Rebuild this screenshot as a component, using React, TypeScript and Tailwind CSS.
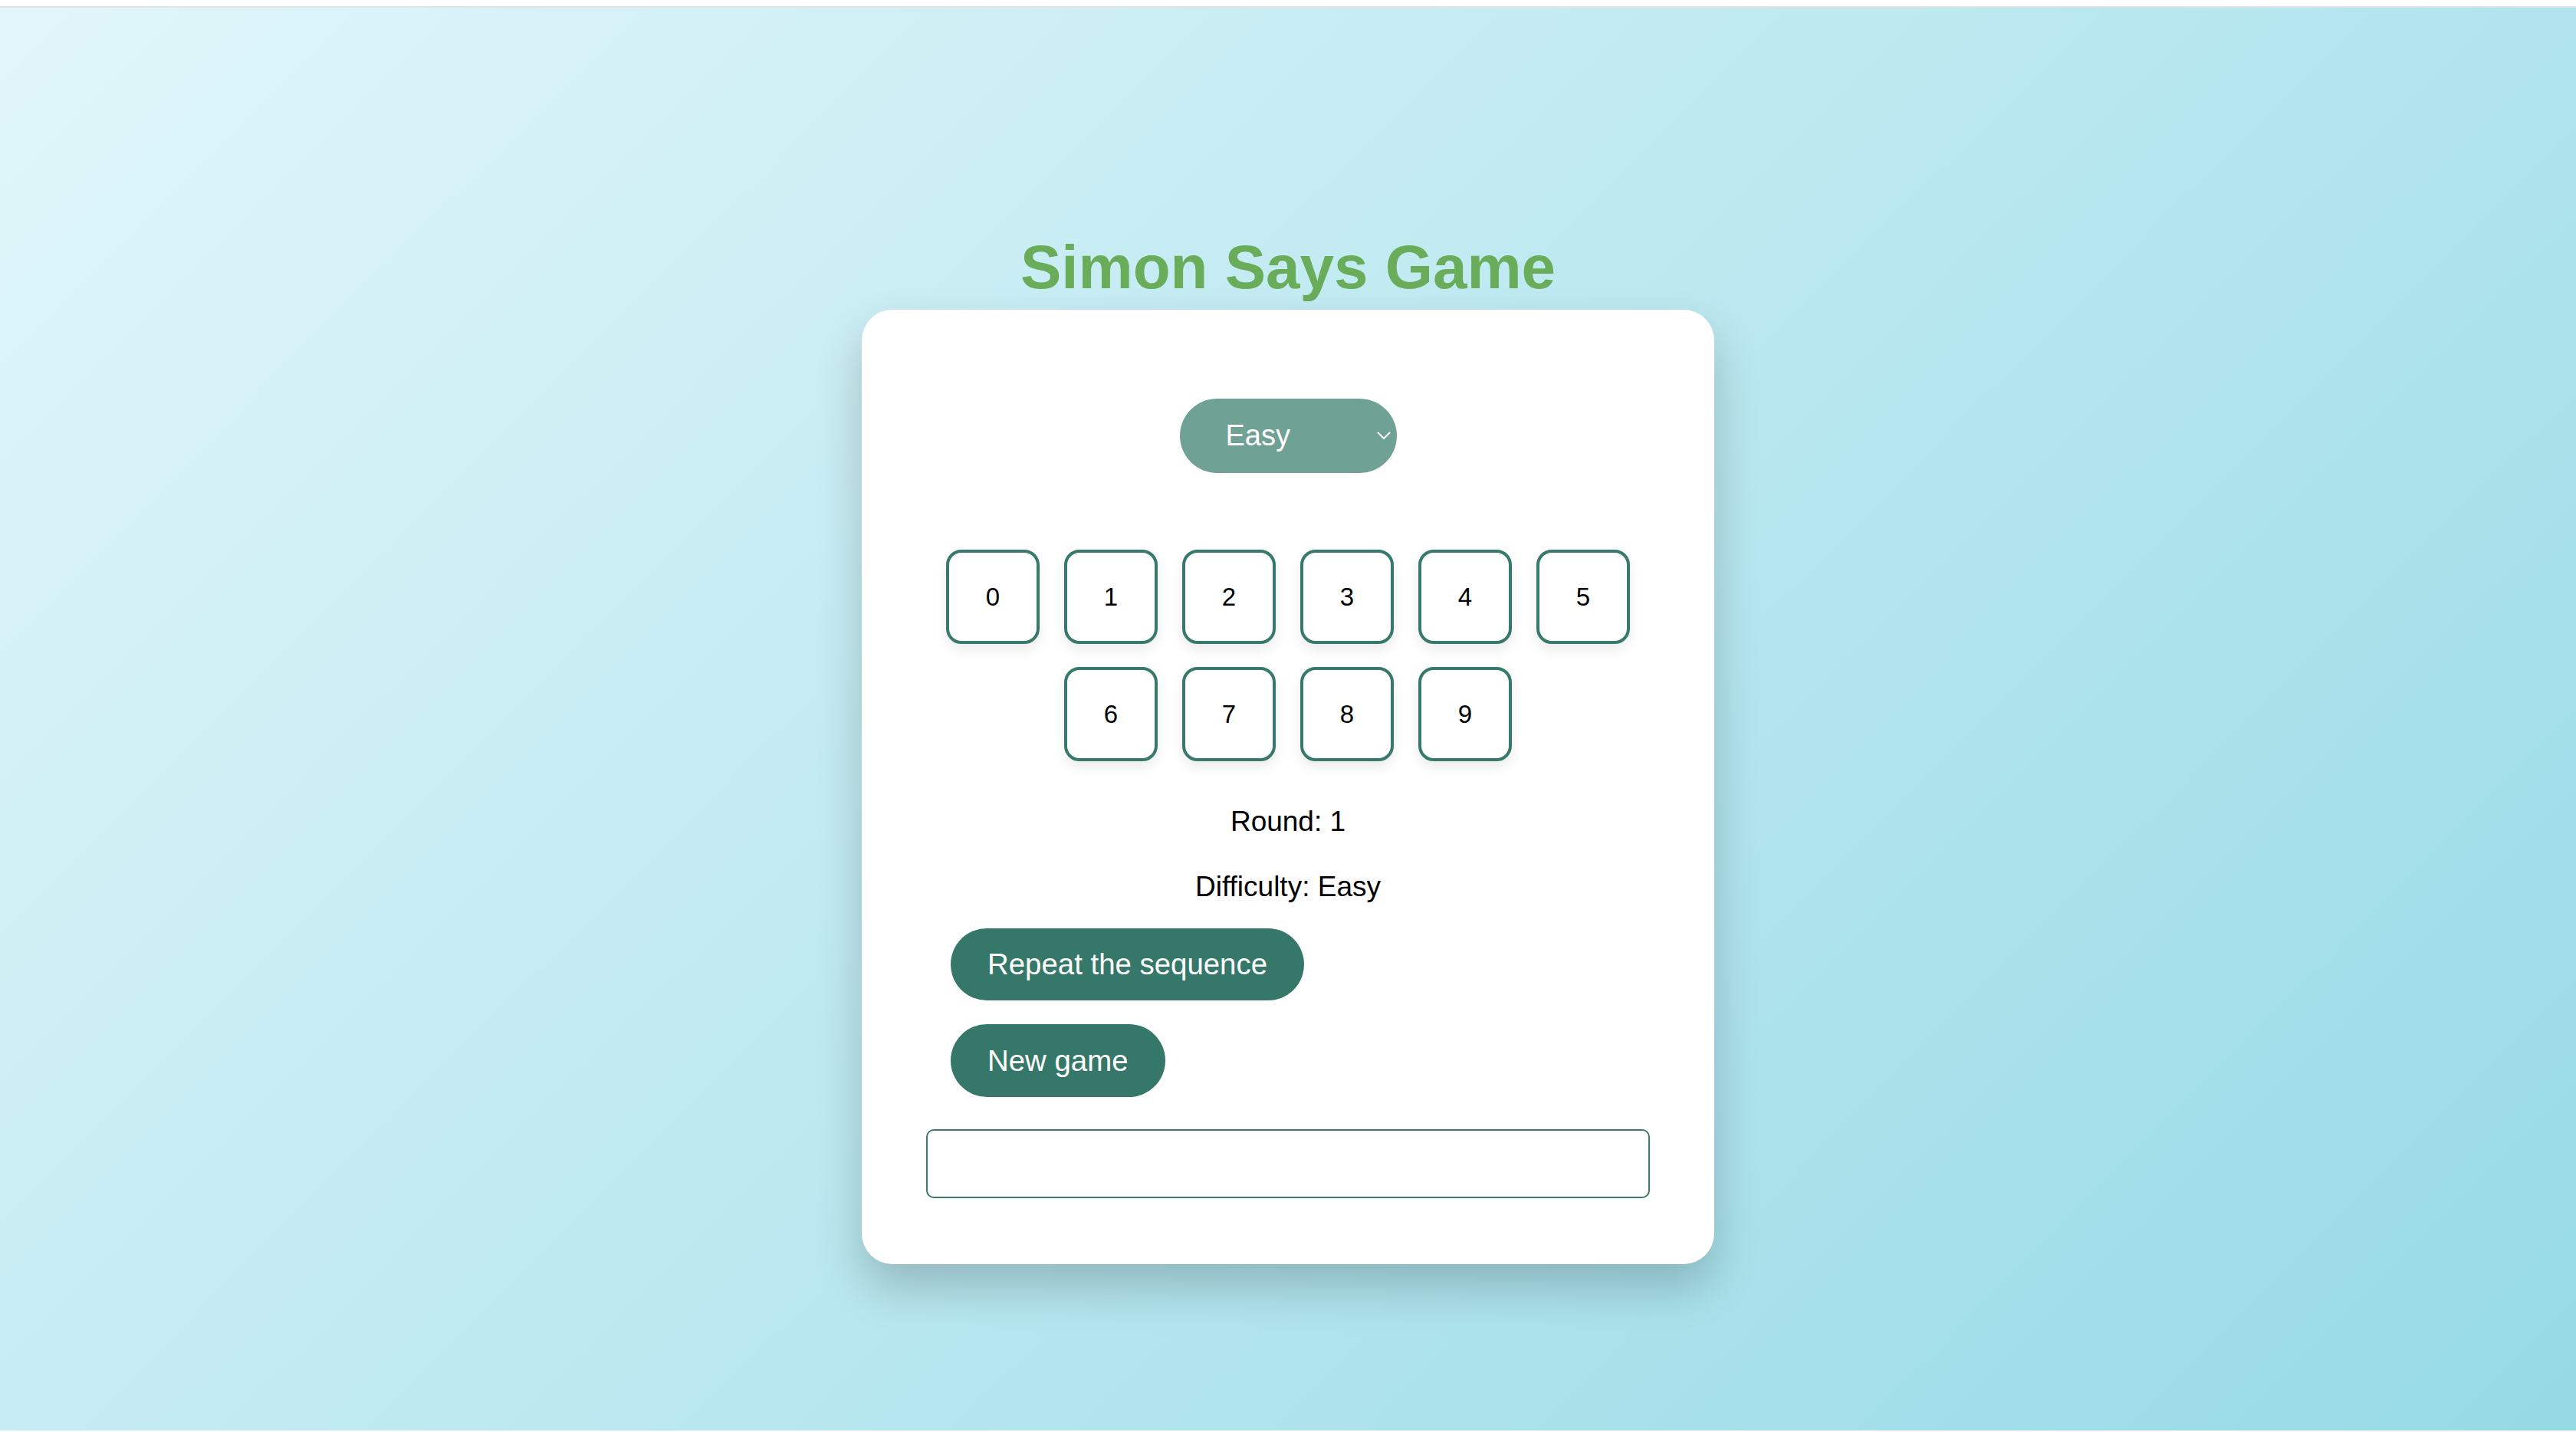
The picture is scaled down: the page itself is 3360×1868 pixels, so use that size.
import React, { useState } from "react";

const DIGITS = [0, 1, 2, 3, 4, 5, 6, 7, 8, 9];

function DigitButton({ value }: { value: number }) {
    return (
        <button className="w-[122px] h-[123px] rounded-[20px] border-4 border-[#377a6c] bg-white text-[33px] text-black shadow-[0_8px_16px_rgba(0,0,0,0.08)] flex items-center justify-center">
            {value}
        </button>
    );
}

export default function App() {
    const [level, setLevel] = useState("Easy");
    const [answer, setAnswer] = useState("");

    return (
        <div className="min-h-[1868px] w-full font-['Liberation_Sans',Arial,sans-serif] bg-white">
            <div className="h-[10px] bg-white border-b-2 border-[#e2e2e2]" />
            <main className="min-h-[1856px] bg-[linear-gradient(135deg,#e1f6fa_0%,#96dae6_100%)] flex flex-col items-center pt-[299px] pb-[200px]">
                <h1 className="text-[80px] leading-[80px] font-bold text-[#69ad5b]">Simon Says Game</h1>

                <div className="mt-[15px] w-[1112px] rounded-[40px] bg-white shadow-[0_30px_60px_rgba(0,0,0,0.2)] px-[84px] pt-[116px] pb-[86px] flex flex-col">
                    <div className="relative self-center w-[283px] h-[97px]">
                        <select
                            value={level}
                            onChange={(e) => setLevel(e.target.value)}
                            className="appearance-none w-full h-full rounded-full bg-[#6fa195] text-white text-[38px] pl-[60px] outline-none"
                        >
                            <option>Easy</option>
                            <option>Medium</option>
                            <option>Hard</option>
                        </select>
                        <svg
                            className="absolute right-[8px] top-[43px] pointer-events-none"
                            width="18"
                            height="10"
                            viewBox="0 0 18 10"
                            fill="none"
                        >
                            <path d="M1 1l8 8 8-8" stroke="white" strokeWidth="2" />
                        </svg>
                    </div>

                    <div className="self-center mt-[100px] w-[892px] flex flex-wrap justify-center gap-x-[32px] gap-y-[30px]">
                        {DIGITS.map((d) => (
                            <DigitButton key={d} value={d} />
                        ))}
                    </div>

                    <p className="mt-[58px] text-center text-[37px] leading-[1.15] text-black">Round: 1</p>
                    <p className="mt-[42px] text-center text-[37px] leading-[1.15] text-black">Difficulty: {level}</p>

                    <div className="ml-[32px] mt-[33px] flex flex-col items-start gap-[31px]">
                        <button className="h-[94px] px-[48px] rounded-full bg-[#357869] text-white text-[38.4px]">
                            Repeat the sequence
                        </button>
                        <button className="h-[95px] px-[48px] rounded-full bg-[#357869] text-white text-[38.4px]">
                            New game
                        </button>
                    </div>

                    <input
                        value={answer}
                        onChange={(e) => setAnswer(e.target.value)}
                        className="mt-[42px] w-full h-[90px] rounded-[10px] border-2 border-[#3a7a6c] outline-none px-4 text-[32px]"
                    />
                </div>
            </main>
        </div>
    );
}
